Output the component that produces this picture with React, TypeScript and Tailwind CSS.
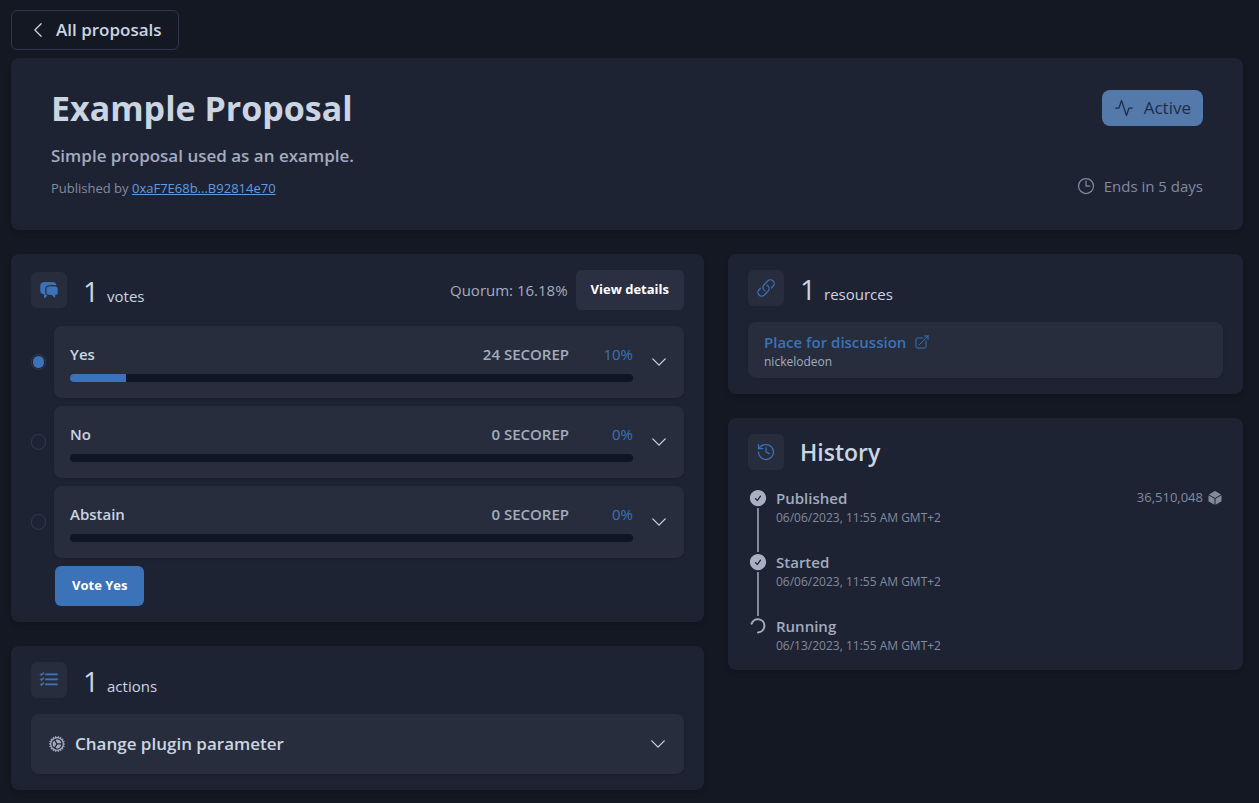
import { useState, type ReactNode } from 'react';
import { History as HistoryIcon } from 'lucide-react';
import {
  HiChatBubbleLeftRight,
  HiCheckCircle,
  HiCog,
  HiCube,
  HiOutlineArrowTopRightOnSquare,
  HiOutlineChevronDown,
  HiOutlineChevronLeft,
  HiOutlineClock,
  HiOutlineLink,
} from 'react-icons/hi2';
import { BsListCheck } from 'react-icons/bs';
import { FiActivity } from 'react-icons/fi';

const options = [
  { name: 'Yes', votes: '24 SECOREP', percent: 10 },
  { name: 'No', votes: '0 SECOREP', percent: 0 },
  { name: 'Abstain', votes: '0 SECOREP', percent: 0 },
];

const events = [
  { title: 'Published', date: '06/06/2023, 11:55 AM GMT+2', block: '36,510,048', done: true },
  { title: 'Started', date: '06/06/2023, 11:55 AM GMT+2', done: true },
  { title: 'Running', date: '06/13/2023, 11:55 AM GMT+2', done: false },
];

function Card({ children, className = '' }: { children: ReactNode; className?: string }) {
  return <section className={`rounded-lg bg-[#1e2334] shadow-md ${className}`}>{children}</section>;
}

function IconTile({ children }: { children: ReactNode }) {
  return (
    <span className="flex size-9 shrink-0 items-center justify-center rounded-md bg-[#272d3d] text-[#3c72b8]">
      {children}
    </span>
  );
}

function CountHeader({ icon, count, label }: { icon: ReactNode; count: number; label: string }) {
  return (
    <div className="flex h-9 items-center gap-4">
      <IconTile>{icon}</IconTile>
      <h2 className="flex items-baseline gap-2 pt-1.5 leading-9 text-[#cbd5e1]">
        <span className="text-[28px]">{count}</span>
        <span className="text-[15px]">{label}</span>
      </h2>
    </div>
  );
}

function Spinner() {
  return (
    <svg viewBox="0 0 20 20" fill="none" className="size-5 shrink-0 text-[#a3acbf]">
      <path d="M3.6 7.6A6.6 6.6 0 1 1 10 16.4" stroke="currentColor" strokeWidth="2" strokeLinecap="round" />
    </svg>
  );
}

export default function App() {
  const [choice, setChoice] = useState('Yes');

  return (
    <div className="min-h-screen bg-[#141822] py-[10px] pr-4 pl-[11px] font-['Open_Sans',sans-serif] text-[#cbd5e1]">
      <a
        href="#proposals"
        className="inline-flex h-10 items-center gap-2 rounded-md border border-[#30364c] px-4 text-[17px] font-semibold"
      >
        <HiOutlineChevronLeft className="size-5" />
        All proposals
      </a>

      <Card className="mt-2 flex justify-between px-10 py-8">
        <div>
          <h1 className="text-[34px] leading-9 font-bold">Example Proposal</h1>
          <p className="mt-4 text-[17px] leading-7 font-semibold text-[#a3acbf]">Simple proposal used as an example.</p>
          <p className="mt-2 text-[13px] leading-5 text-[#838a9c]">
            Published by{' '}
            <a href="#publisher" className="text-[#619be2] underline">
              0xaF7E68b...B92814e70
            </a>
          </p>
        </div>
        <div className="flex flex-col items-end justify-between">
          <span className="flex h-9 items-center gap-2.5 rounded-lg bg-[#5479ab] px-3 text-[17px] text-[#1e2c48]">
            <FiActivity className="size-5" strokeWidth={1.5} />
            Active
          </span>
          <span className="flex items-center gap-2 text-[15px] leading-6 text-[#838a9c]">
            <HiOutlineClock className="size-5" />
            Ends in 5 days
          </span>
        </div>
      </Card>

      <div className="mt-6 grid grid-cols-[693fr_515fr] items-start gap-6">
        <div className="flex flex-col gap-6">
          <Card className="px-5 py-4">
            <div className="flex items-center justify-between">
              <CountHeader icon={<HiChatBubbleLeftRight className="size-5" />} count={1} label="votes" />
              <div className="flex items-center gap-2">
                <span className="text-[15px] text-[#a3acbf]">Quorum: 16.18%</span>
                <button type="button" className="h-10 rounded-md bg-[#2a3042] px-[15px] text-[13px] font-bold text-white">
                  View details
                </button>
              </div>
            </div>

            <div className="mt-4 flex flex-col gap-2">
              {options.map((option) => (
                <div key={option.name} className="flex items-center gap-2">
                  <input
                    type="radio"
                    name="vote"
                    aria-label={option.name}
                    checked={choice === option.name}
                    onChange={() => setChoice(option.name)}
                    className="h-4 w-[15px] shrink-0 appearance-none rounded-full border border-[#343a4f] p-px checked:bg-[#3c72b8] checked:bg-clip-content"
                  />
                  <div className="flex grow items-center gap-4 rounded-lg bg-[#272d3d] py-4 pr-[15px] pl-4 shadow-sm">
                    <div className="grow">
                      <div className="flex text-[15px] leading-6 font-semibold">
                        <span className="grow">{option.name}</span>
                        <span className="text-[#a3acbf]">{option.votes}</span>
                        <span className="w-16 text-right font-medium text-[#3c72b8]">{option.percent}%</span>
                      </div>
                      <div className="mt-2 h-2 overflow-hidden rounded-full bg-[#101526]">
                        <div className="h-full bg-[#3c72b8]" style={{ width: `${option.percent}%` }} />
                      </div>
                    </div>
                    <button type="button" aria-label={`Show ${option.name} votes`} className="shrink-0">
                      <HiOutlineChevronDown className="size-5" />
                    </button>
                  </div>
                </div>
              ))}
            </div>

            <button
              type="button"
              className="mt-2 ml-6 h-10 rounded-md bg-[#3c72b8] px-[17px] text-[13px] font-bold text-white"
            >
              Vote {choice}
            </button>
          </Card>

          <Card className="px-5 py-4">
            <CountHeader
              icon={<BsListCheck className="size-5" stroke="currentColor" strokeWidth={0.5} />}
              count={1}
              label="actions"
            />
            <button
              type="button"
              className="mt-4 flex h-[60px] w-full items-center gap-2 rounded-lg bg-[#272d3d] px-4 text-left shadow-sm"
            >
              <HiCog className="size-5 text-[#a3acbf]" />
              <span className="grow text-[17px] font-semibold">Change plugin parameter</span>
              <HiOutlineChevronDown className="size-5" />
            </button>
          </Card>
        </div>

        <div className="flex flex-col gap-6">
          <Card className="px-5 py-4">
            <CountHeader icon={<HiOutlineLink className="size-5" />} count={1} label="resources" />
            <div className="mt-4 rounded-lg bg-[#272d3d] px-4 py-2 shadow-sm">
              <a
                href="#discussion"
                className="flex items-center gap-2 text-[15px] leading-6 font-semibold text-[#3c72b8]"
              >
                Place for discussion
                <HiOutlineArrowTopRightOnSquare className="size-4" />
              </a>
              <p className="text-[12px] leading-4 text-[#a3acbf]">nickelodeon</p>
            </div>
          </Card>

          <Card className="px-5 py-4">
            <div className="flex items-center gap-4">
              <IconTile>
                <HistoryIcon className="size-5" strokeWidth={1.5} />
              </IconTile>
              <h2 className="text-[23px] leading-9 font-semibold">History</h2>
            </div>
            <ol className="mt-4">
              {events.map((event) => (
                <li key={event.title} className="group flex gap-2">
                  <div className="flex w-5 flex-col items-center pt-0.5">
                    {event.done ? <HiCheckCircle className="size-5 shrink-0 text-[#a8b0c2]" /> : <Spinner />}
                    <span className="-mb-0.5 w-[2px] grow bg-[#838a9c] group-last:hidden" />
                  </div>
                  <div className="grow pb-6 group-last:pb-0">
                    <div className="flex justify-between">
                      <h3 className="text-[15px] leading-6 font-semibold text-[#a3acbf]">{event.title}</h3>
                      {event.block && (
                        <span className="flex items-center gap-1 text-[13px] text-[#838a9c]">
                          {event.block}
                          <HiCube className="size-4" />
                        </span>
                      )}
                    </div>
                    <p className="text-[12px] leading-4 text-[#838a9c]">{event.date}</p>
                  </div>
                </li>
              ))}
            </ol>
          </Card>
        </div>
      </div>
    </div>
  );
}
